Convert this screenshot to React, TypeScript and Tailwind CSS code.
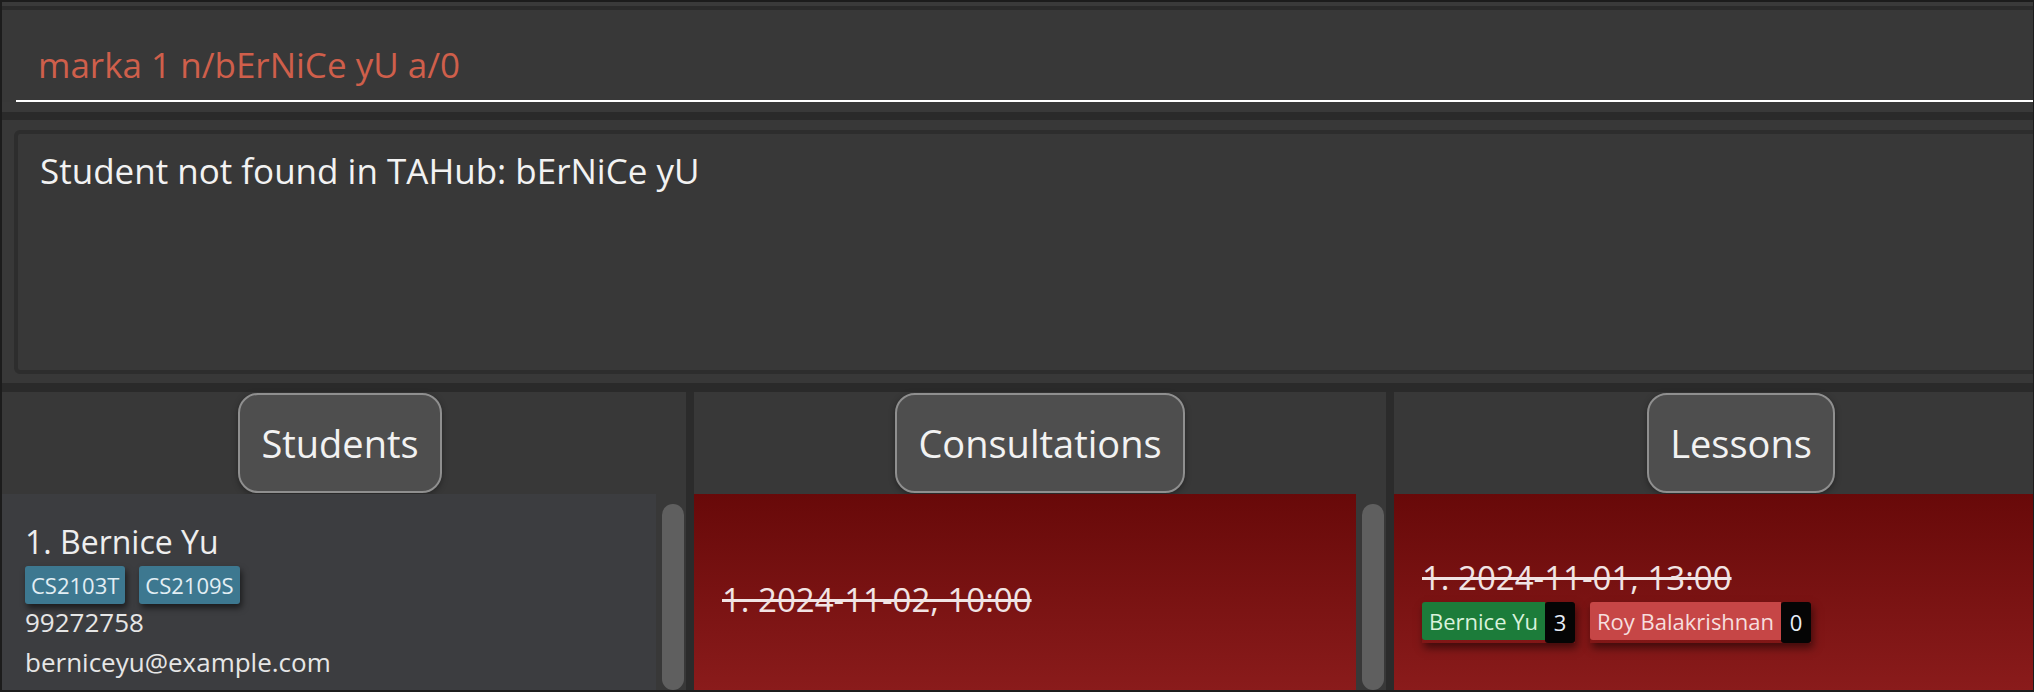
import React from "react";

const font = { fontFamily: '"Open Sans", "Noto Sans", sans-serif' };

function HeaderButton({ label, className = "" }: { label: string; className?: string }) {
  return (
    <div
      className={`h-[100px] flex items-center px-[21px] rounded-[20px] border-2 border-[#8f8f8f] bg-[#4e4e4e] text-[#f2f2f2] text-[38px] leading-none shadow-[0_2px_6px_rgba(0,0,0,0.35)] ${className}`}
    >
      {label}
    </div>
  );
}

function Tag({ text }: { text: string }) {
  return (
    <span className="h-[38px] flex items-center px-[6px] rounded-[3px] bg-[#3d7890] text-[#e2eef4] text-[22px] shadow-[2px_4px_6px_rgba(0,0,0,0.55)]">
      {text}
    </span>
  );
}

function Attendee({ name, count, tone }: { name: string; count: number; tone: "green" | "red" }) {
  return (
    <div className="flex items-start shadow-[2px_5px_8px_rgba(0,0,0,0.5)]">
      <span
        className={`h-[38px] flex items-center px-[7px] rounded-l-[3px] text-[22px] ${
          tone === "green" ? "bg-[#1c7c3a] text-[#d9f2dc]" : "bg-[#c64646] text-[#f6dede]"
        }`}
      >
        {name}
      </span>
      <span className="h-[41px] w-[30px] flex items-center justify-center rounded-[3px] bg-[#050505] text-[#e8eef8] text-[22px]">
        {count}
      </span>
    </div>
  );
}

function Scrollbar() {
  return (
    <div className="w-[30px] bg-[#383838] pl-[6px] pt-[10px]">
      <div className="w-[22px] h-full rounded-full bg-[#5f5f5f]" />
    </div>
  );
}

export default function App() {
  return (
    <div
      className="w-[2034px] h-[692px] overflow-hidden bg-[#383838] border-[#1c1c1c] border-t-2 border-l-2 border-b-2 border-r"
      style={font}
    >
      <div className="w-[2086px] h-full flex flex-col">
        {/* top strips */}
        <div className="h-1 bg-[#3a3a3a]" />
        <div className="h-1 bg-[#2b2b2b]" />

        {/* command box */}
        <div className="h-[90px] bg-[#383838] pl-[36px] pt-[33px] text-[35px] leading-[44px] text-[#cf5f4b]">
          marka 1 n/bErNiCe yU a/0
        </div>
        <div className="h-[2px] ml-[14px] bg-white" />
        <div className="h-[10px] bg-[#393939]" />
        <div className="h-2 bg-[#2a2a2a]" />

        {/* result display */}
        <div className="pt-[10px] pl-[12px] pb-[9px] bg-[#383838]">
          <div className="h-[244px] rounded-md border-4 border-[#2d2d2d] bg-[#383838] pl-[22px] pt-[15px] text-[35px] leading-[44px] text-[#f2f2f2]">
            Student not found in TAHub: bErNiCe yU
          </div>
        </div>
        <div className="h-[9px] bg-[#2a2a2a]" />

        {/* lists */}
        <div className="flex-1 flex min-h-0">
          {/* Students */}
          <div className="w-[684px] flex flex-col">
            <div className="h-[102px] flex items-center justify-center pr-[8px]">
              <HeaderButton label="Students" />
            </div>
            <div className="flex-1 flex">
              <div className="flex-1 bg-[#3c3d40] pl-[23px] pt-[28px]">
                <div className="text-[32px] leading-[40px] text-[#eeeeee]">1. Bernice Yu</div>
                <div className="flex gap-[14px] mt-[4px]">
                  <Tag text="CS2103T" />
                  <Tag text="CS2109S" />
                </div>
                <div className="text-[26px] leading-[36px] text-[#e6e6e6]">99272758</div>
                <div className="text-[26px] leading-[36px] mt-[4px] text-[#e6e6e6]">berniceyu@example.com</div>
              </div>
              <Scrollbar />
            </div>
          </div>

          <div className="w-[8px] bg-[#2b2b2b]" />

          {/* Consultations */}
          <div className="w-[692px] flex flex-col">
            <div className="h-[102px] flex items-center justify-center">
              <HeaderButton label="Consultations" />
            </div>
            <div className="flex-1 flex">
              <div className="flex-1 bg-gradient-to-b from-[#680909] to-[#8a1b1b] pl-[28px] pt-[86px]">
                <div className="text-[33px] leading-[40px] text-[#f1e4e4] line-through">1. 2024-11-02, 10:00</div>
              </div>
              <Scrollbar />
            </div>
          </div>

          <div className="w-[8px] bg-[#2b2b2b]" />

          {/* Lessons */}
          <div className="w-[694px] flex flex-col">
            <div className="h-[102px] flex items-center justify-center">
              <HeaderButton label="Lessons" />
            </div>
            <div className="flex-1 bg-gradient-to-b from-[#680909] to-[#8a1b1b] pl-[28px] pt-[64px]">
              <div className="text-[33px] leading-[40px] text-[#f1e4e4] line-through">1. 2024-11-01, 13:00</div>
              <div className="flex gap-[15px] mt-[4px]">
                <Attendee name="Bernice Yu" count={3} tone="green" />
                <Attendee name="Roy Balakrishnan" count={0} tone="red" />
              </div>
            </div>
          </div>
        </div>
      </div>
    </div>
  );
}
